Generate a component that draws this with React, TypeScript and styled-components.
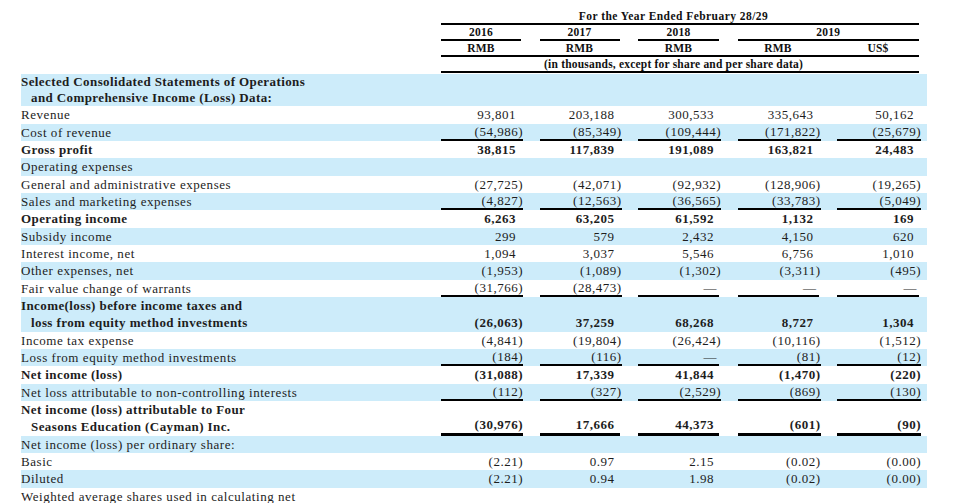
import styled, { createGlobalStyle } from 'styled-components';

const LINE = 17.33;
const COLS = '401.5px 80px 80px 81px 81px 82px';
const GAP = '18.5px';
const SHADE = '#cdecfa';

const GlobalStyle = createGlobalStyle`
    html, body {
        margin: 0;
        padding: 0;
        background: #ffffff;
        overflow: hidden;
    }
    body {
        font-family: "Liberation Serif", "Times New Roman", serif;
        color: #1d1d1d;
    }
`

const Page = styled.div`
    padding: 9px 0 0 21px;
`
const Head = styled.div`
    display: flex;
    flex-direction: column;
    margin-left: 420px;
    width: 478px;
    font-size: 11.5px;
    font-weight: bold;
    letter-spacing: 0.2px;
    color: #111;
`
const HeadLine = styled.div<{ $rule?: boolean }>`
    display: grid;
    grid-template-columns: 80px 80px 81px 81px 82px;
    column-gap: ${GAP};
    height: 16px;
    box-sizing: border-box;
    border-bottom: 2px solid ${p => p.$rule ? '#000' : 'transparent'};
`
const HeadCell = styled.div<{ $span?: number; $under?: boolean; $wide?: boolean }>`
    grid-column: span ${p => p.$span || 1};
    text-align: center;
    line-height: 14px;
    white-space: nowrap;
    padding-right: ${p => p.$span === 5 ? '13px' : '0'};
    letter-spacing: ${p => p.$wide ? '0.45px' : 'inherit'};
    box-shadow: ${p => p.$under ? '0 2px 0 #000' : 'none'};
`
const Body = styled.div`
    display: flex;
    flex-direction: column;
    width: 906px;
    padding-top: 1px;
    font-size: 13px;
    letter-spacing: 0.55px;
`
const Row = styled.div<{ $shade: boolean; $lh: number }>`
    display: grid;
    grid-template-columns: ${COLS};
    column-gap: ${GAP};
    line-height: ${p => p.$lh}px;
    background: ${p => p.$shade ? SHADE : 'transparent'};
`
const Label = styled.div<{ $bold?: boolean }>`
    display: flex;
    flex-direction: column;
    font-weight: ${p => p.$bold ? 'bold' : 'normal'};
    letter-spacing: ${p => p.$bold ? '0.4px' : 'inherit'};
    white-space: nowrap;
`
const LabelLine = styled.span<{ $indent?: boolean }>`
    padding-left: ${p => p.$indent ? '10px' : '0'};
`
const Value = styled.div<{ $bold?: boolean; $pad: number; $rule: number }>`
    align-self: end;
    text-align: right;
    white-space: nowrap;
    letter-spacing: 0.5px;
    line-height: ${p => LINE - p.$rule}px;
    padding-right: ${p => p.$pad}px;
    margin-right: ${p => p.$pad === 0 ? '-2px' : '0'};
    font-weight: ${p => p.$bold ? 'bold' : 'normal'};
    border-bottom: ${p => p.$rule ? `${p.$rule}px solid #000` : 'none'};
`

type Line = {
    label: string[]
    bold?: boolean
    values?: string[]
    rule?: number
    lh?: number
}

const lines: Array<Line> = [
    { label: ['Selected Consolidated Statements of Operations', 'and Comprehensive Income (Loss) Data:'], bold: true, lh: 16.15 },
    { label: ['Revenue'], values: ['93,801', '203,188', '300,533', '335,643', '50,162'] },
    { label: ['Cost of revenue'], values: ['(54,986)', '(85,349)', '(109,444)', '(171,822)', '(25,679)'], rule: 2 },
    { label: ['Gross profit'], bold: true, values: ['38,815', '117,839', '191,089', '163,821', '24,483'] },
    { label: ['Operating expenses'] },
    { label: ['General and administrative expenses'], values: ['(27,725)', '(42,071)', '(92,932)', '(128,906)', '(19,265)'] },
    { label: ['Sales and marketing expenses'], values: ['(4,827)', '(12,563)', '(36,565)', '(33,783)', '(5,049)'], rule: 2 },
    { label: ['Operating income'], bold: true, values: ['6,263', '63,205', '61,592', '1,132', '169'] },
    { label: ['Subsidy income'], values: ['299', '579', '2,432', '4,150', '620'] },
    { label: ['Interest income, net'], values: ['1,094', '3,037', '5,546', '6,756', '1,010'] },
    { label: ['Other expenses, net'], values: ['(1,953)', '(1,089)', '(1,302)', '(3,311)', '(495)'] },
    { label: ['Fair value change of warrants'], values: ['(31,766)', '(28,473)', '—', '—', '—'], rule: 2 },
    { label: ['Income(loss) before income taxes and', 'loss from equity method investments'], bold: true, values: ['(26,063)', '37,259', '68,268', '8,727', '1,304'] },
    { label: ['Income tax expense'], values: ['(4,841)', '(19,804)', '(26,424)', '(10,116)', '(1,512)'] },
    { label: ['Loss from equity method investments'], values: ['(184)', '(116)', '—', '(81)', '(12)'], rule: 2 },
    { label: ['Net income (loss)'], bold: true, values: ['(31,088)', '17,339', '41,844', '(1,470)', '(220)'] },
    { label: ['Net loss attributable to non-controlling interests'], values: ['(112)', '(327)', '(2,529)', '(869)', '(130)'], rule: 2 },
    { label: ['Net income (loss) attributable to Four', 'Seasons Education (Cayman) Inc.'], bold: true, values: ['(30,976)', '17,666', '44,373', '(601)', '(90)'], rule: 3 },
    { label: ['Net income (loss) per ordinary share:'] },
    { label: ['Basic'], values: ['(2.21)', '0.97', '2.15', '(0.02)', '(0.00)'] },
    { label: ['Diluted'], values: ['(2.21)', '0.94', '1.98', '(0.02)', '(0.00)'] },
    { label: ['Weighted average shares used in calculating net'] },
]

const padFor = (v: string) => v.startsWith('(') ? 0 : v === '—' ? 2 : 5;

const App = () => {
    return (
        <>
            <GlobalStyle />
            <Page>
                <Head>
                    <HeadLine $rule>
                        <HeadCell $span={5} $wide>For the Year Ended February 28/29</HeadCell>
                    </HeadLine>
                    <HeadLine>
                        <HeadCell $under>2016</HeadCell>
                        <HeadCell $under>2017</HeadCell>
                        <HeadCell $under>2018</HeadCell>
                        <HeadCell $under $span={2}>2019</HeadCell>
                    </HeadLine>
                    <HeadLine $rule>
                        <HeadCell>RMB</HeadCell>
                        <HeadCell>RMB</HeadCell>
                        <HeadCell>RMB</HeadCell>
                        <HeadCell>RMB</HeadCell>
                        <HeadCell>US$</HeadCell>
                    </HeadLine>
                    <HeadLine $rule>
                        <HeadCell $span={5}>(in thousands, except for share and per share data)</HeadCell>
                    </HeadLine>
                </Head>
                <Body>
                    {lines.map((item, index) => (
                        <Row key={'row-' + index} $shade={index % 2 === 0} $lh={item.lh || LINE}>
                            <Label $bold={item.bold}>
                                {item.label.map((text, i) => (
                                    <LabelLine key={i} $indent={i > 0}>{text}</LabelLine>
                                ))}
                            </Label>
                            {item.values && item.values.map((v, i) => (
                                <Value
                                    key={'v-' + i}
                                    $bold={item.bold}
                                    $pad={padFor(v)}
                                    $rule={item.rule || 0}
                                >
                                    {v}
                                </Value>
                            ))}
                        </Row>
                    ))}
                </Body>
            </Page>
        </>
    )
}
export default App;
